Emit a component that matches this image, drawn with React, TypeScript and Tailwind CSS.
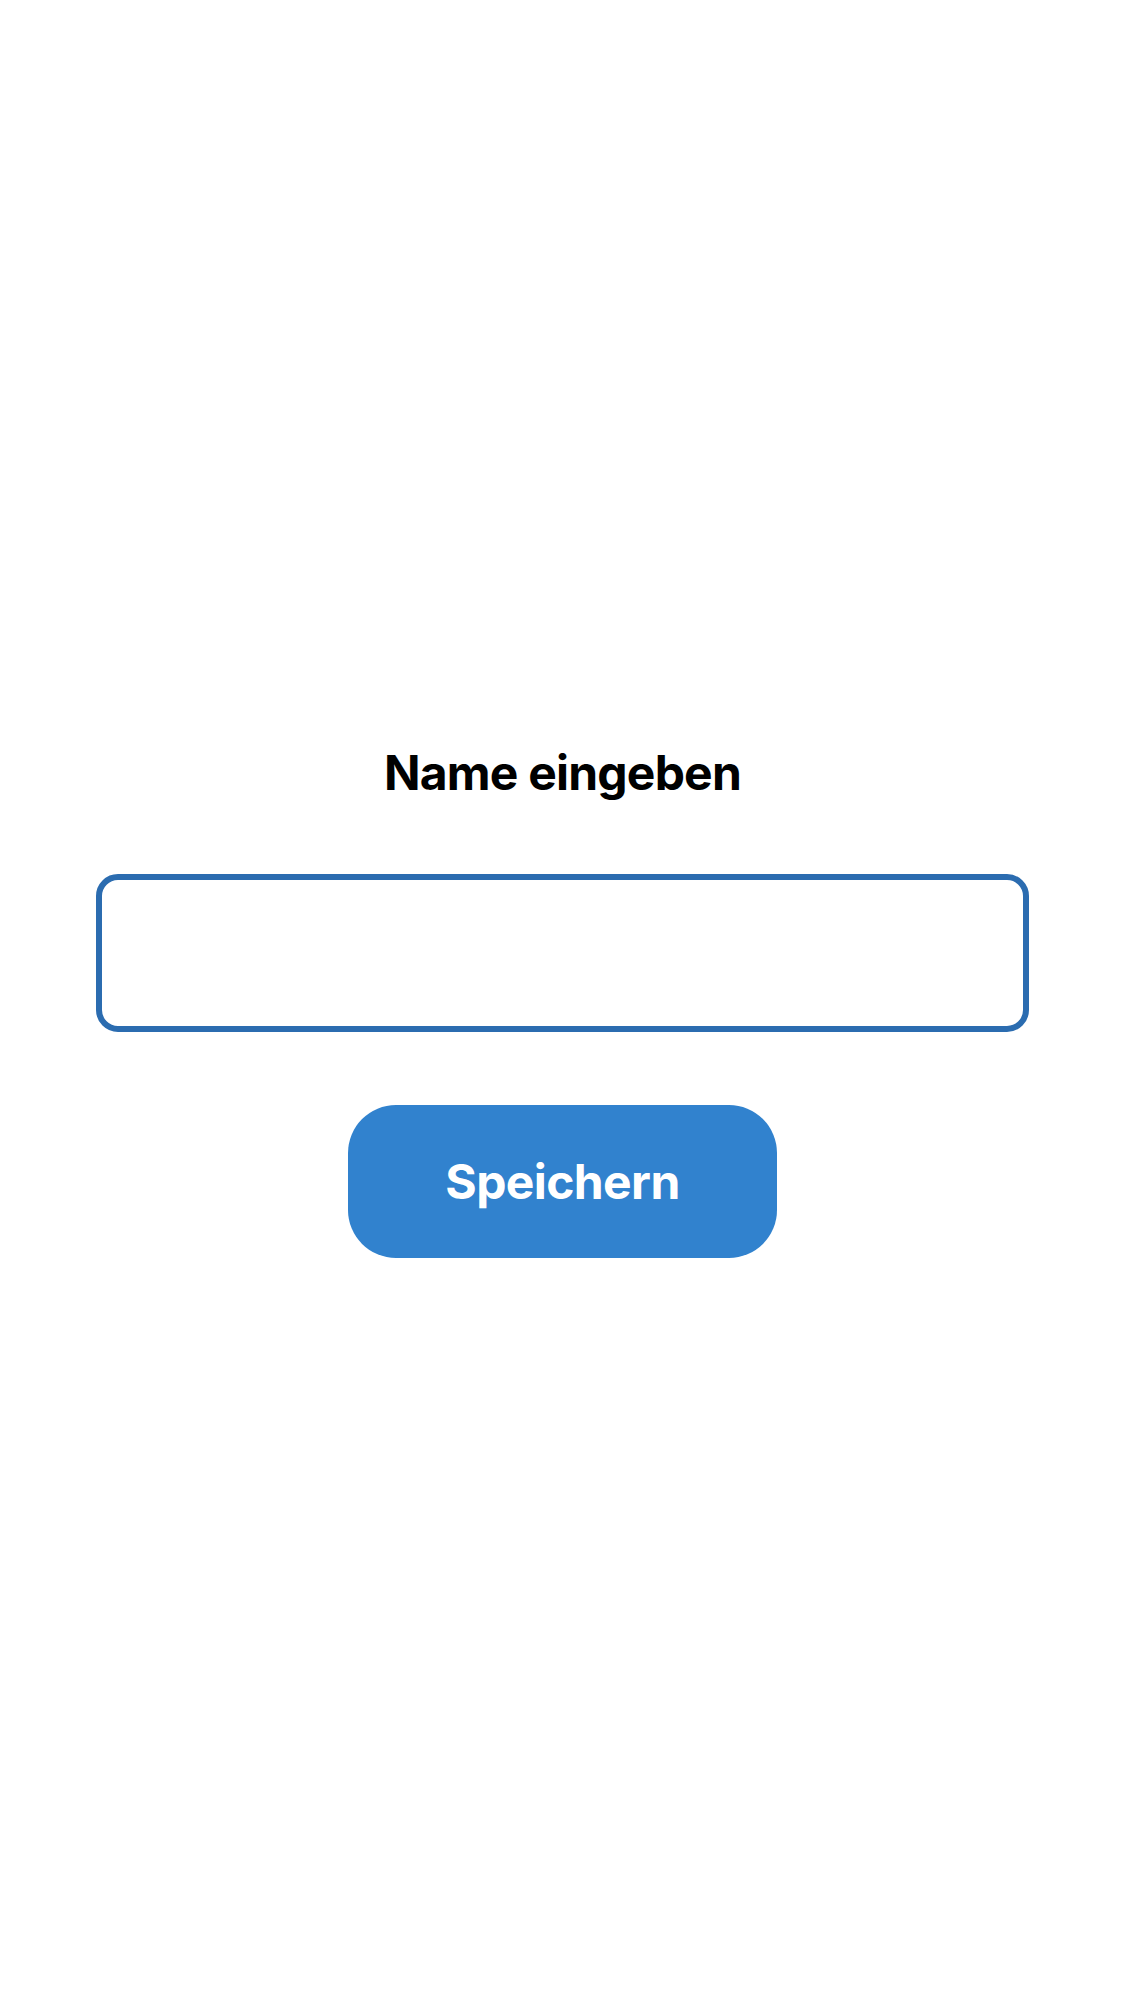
import { useState } from 'react'

const App = () => {
  const [name, setName] = useState('')

  return (
    <main
      className="min-h-screen w-full bg-white flex flex-col items-center justify-center px-24"
      style={{ fontFamily: 'Inter, "Noto Sans", sans-serif' }}
    >
      <h1 className="text-[48px] leading-[60px] font-bold tracking-[-0.8px] text-black">Name eingeben</h1>

      {/* Name input */}
      <input
        type="text"
        value={name}
        onChange={(e) => setName(e.target.value)}
        className="mt-[71px] w-full h-[158px] rounded-[22px] border-[6px] border-[#2b6cb0] bg-white px-8 text-[44px] outline-none"
      />

      <button
        type="button"
        className="mt-[73px] w-[429px] h-[153px] rounded-[48px] bg-[#3182ce] text-white text-[48px] font-bold tracking-[-0.6px]"
      >
        Speichern
      </button>
    </main>
  )
}

export default App
